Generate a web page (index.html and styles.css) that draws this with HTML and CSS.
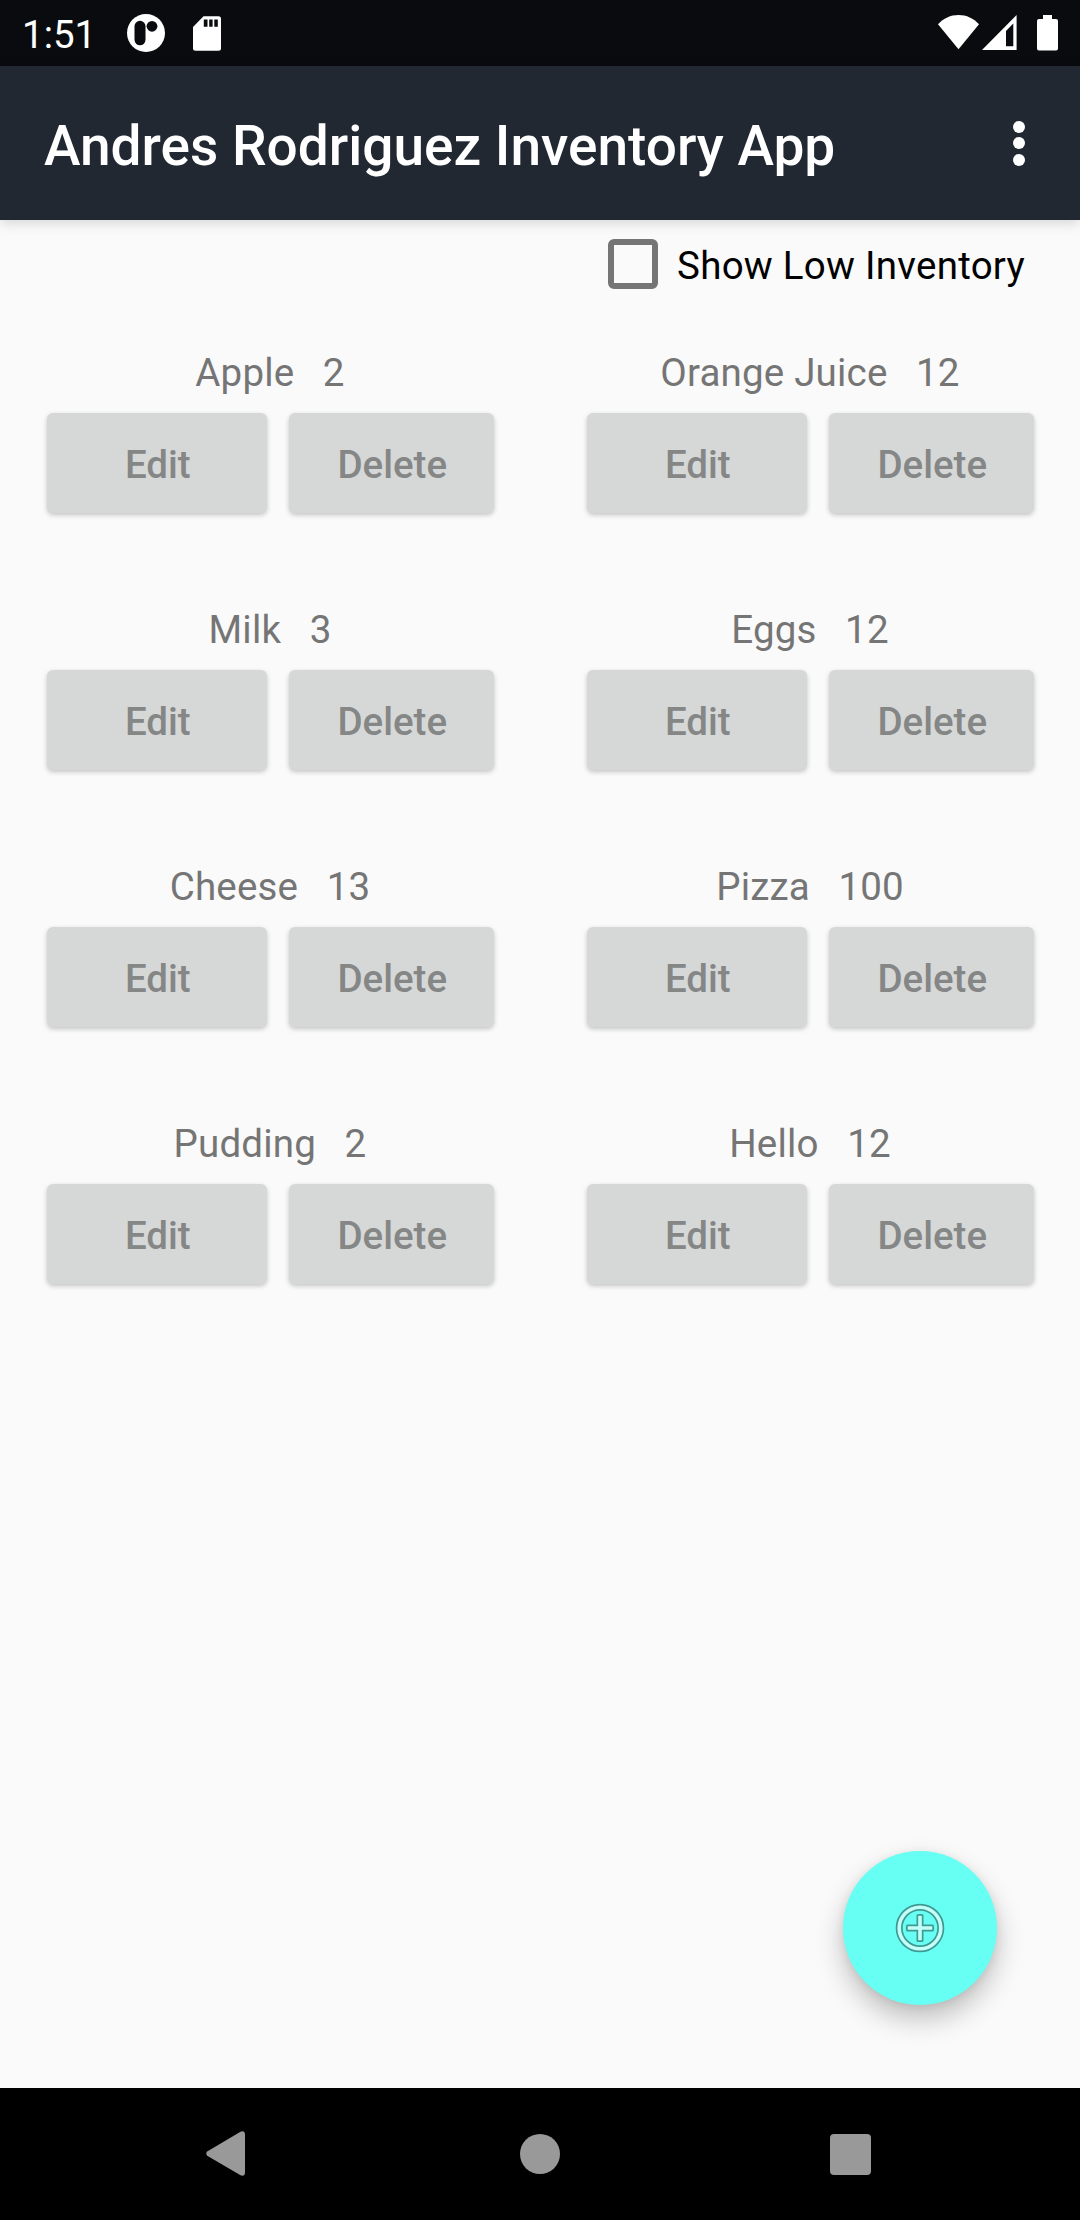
FILE: index.html
```html
<!DOCTYPE html>
<html lang="en">
<head>
<meta charset="utf-8">
<title>Andres Rodriguez Inventory App</title>
<link rel="stylesheet" href="styles.css">
</head>
<body>
<div class="status-bar">
  <span class="clock">1:51</span>
  <svg class="notif" width="38" height="38" viewBox="0 0 38 38"><circle cx="19" cy="19" r="19" fill="#fff"/><rect x="7.5" y="6.8" width="11" height="24.5" rx="5.5" fill="#0a0b0f"/><circle cx="25" cy="12.3" r="5.4" fill="#0a0b0f"/></svg>
  <svg class="sd" width="28" height="35" viewBox="0 0 28 35"><path d="M10.500.3H25.500A2.500 2.500 0 0 1 28 2.800V32.200A2.500 2.500 0 0 1 25.500 34.700H2.500A2.500 2.500 0 0 1 0 32.200V11Z" fill="#fff"/><path d="M10.800 3.500h3.700v7.300h-3.700zM16.200 3.500h3.400v7.300h-3.400zM21.300 3.500h3.500v7.300h-3.500z" fill="#0a0b0f"/></svg>
  <span class="spacer"></span>
  <svg class="wifi" width="41" height="35" viewBox="0 0 41 35"><path d="M0 9.300C5.500 3.300 12.500 0 20.500 0S35.500 3.300 41 9.300L20.500 34.300Z" fill="#fff"/></svg>
  <svg class="signal" width="35" height="35" viewBox="0 0 35 35"><path fill-rule="evenodd" d="M34.600 0V35H0ZM31.300 8.500L24 16V31.300H31.300Z" fill="#fff"/></svg>
  <svg class="battery" width="21" height="36" viewBox="0 0 21 36"><path d="M6 0H15V4H19Q21 4 21 6V33.500Q21 35.500 19 35.500H2Q0 35.500 0 33.500V6Q0 4 2 4H6Z" fill="#fff"/></svg>
</div>
<header class="app-bar">
  <h1 class="title">Andres Rodriguez Inventory App</h1>
  <div class="overflow"><i class="dot"></i><i class="dot"></i><i class="dot"></i></div>
</header>
<main class="content">
  <label class="filter"><span class="box"></span><span class="filter-label">Show Low Inventory</span></label>
  <section class="grid">
    <article class="item"><p class="line"><span>Apple</span><span>2</span></p><div class="actions"><button class="btn">Edit</button><button class="btn">Delete</button></div></article>
    <article class="item"><p class="line"><span>Orange Juice</span><span>12</span></p><div class="actions"><button class="btn">Edit</button><button class="btn">Delete</button></div></article>
    <article class="item"><p class="line"><span>Milk</span><span>3</span></p><div class="actions"><button class="btn">Edit</button><button class="btn">Delete</button></div></article>
    <article class="item"><p class="line"><span>Eggs</span><span>12</span></p><div class="actions"><button class="btn">Edit</button><button class="btn">Delete</button></div></article>
    <article class="item"><p class="line"><span>Cheese</span><span>13</span></p><div class="actions"><button class="btn">Edit</button><button class="btn">Delete</button></div></article>
    <article class="item"><p class="line"><span>Pizza</span><span>100</span></p><div class="actions"><button class="btn">Edit</button><button class="btn">Delete</button></div></article>
    <article class="item"><p class="line"><span>Pudding</span><span>2</span></p><div class="actions"><button class="btn">Edit</button><button class="btn">Delete</button></div></article>
    <article class="item"><p class="line"><span>Hello</span><span>12</span></p><div class="actions"><button class="btn">Edit</button><button class="btn">Delete</button></div></article>
  </section>
  <button class="fab" aria-label="Add item">
    <svg width="50" height="50" viewBox="0 0 50 50" fill="none">
      <circle cx="25" cy="25" r="20.800" stroke="#3f9a93" stroke-width="7"/>
      <circle cx="25" cy="25" r="20.800" stroke="#c2fff9" stroke-width="3.600"/>
      <path d="M21.500 12.500a1.500 1.500 0 0 1 1.500-1.500h4a1.500 1.500 0 0 1 1.500 1.500v9h9a1.500 1.500 0 0 1 1.500 1.500v4a1.500 1.500 0 0 1-1.500 1.500h-9v9a1.500 1.500 0 0 1-1.500 1.500h-4a1.500 1.500 0 0 1-1.500-1.500v-9h-9a1.500 1.500 0 0 1-1.500-1.500v-4a1.500 1.500 0 0 1 1.500-1.500h9z" fill="#3f9a93"/>
      <path d="M25 12.700V37.300M12.700 25H37.300" stroke="#c2fff9" stroke-width="3.600"/>
    </svg>
  </button>
</main>
<nav class="nav-bar">
  <svg width="40" height="46" viewBox="0 0 40 46"><path d="M1.200 20.500L34.500.800Q38.700-.900 39 3.500V41.500Q38.700 45.900 34.500 44.200L1.200 24.800Q-.700 22.600 1.200 20.500Z" fill="#999"/></svg>
  <svg class="home" width="40" height="40" viewBox="0 0 40 40"><circle cx="20" cy="20" r="20" fill="#999"/></svg>
  <svg width="41" height="41" viewBox="0 0 41 41"><rect width="41" height="41" rx="4" fill="#999"/></svg>
</nav>
</body>
</html>
```
FILE: styles.css
```css
* { box-sizing: border-box; }
body {
  margin: 0;
  width: 1080px;
  height: 2220px;
  display: flex;
  flex-direction: column;
  background: #fafafa;
  font-family: Roboto, "Liberation Sans", sans-serif;
  font-size: 38.5px;
  overflow: hidden;
}
svg { display: block; flex: none; }

.status-bar {
  height: 66px;
  flex: none;
  display: flex;
  align-items: flex-start;
  padding: 0 22px;
  background: #0a0b0f;
  color: #fff;
}
.clock { width: 105px; line-height: 45px; padding-top: 12px; }
.notif { margin-top: 14px; }
.sd { margin: 16px 0 0 28px; }
.spacer { flex: 1; }
.wifi { margin-top: 15px; }
.signal { margin: 15px 20px 0 3px; }
.battery { margin-top: 15px; }

.app-bar {
  height: 154px;
  flex: none;
  display: flex;
  align-items: center;
  justify-content: space-between;
  padding: 0 55px 0 44px;
  background: #212832;
  box-shadow: 0 3px 12px rgba(0, 0, 0, .15);
  color: #fff;
  z-index: 1;
}
.title { margin: 6px 0 0; font-size: 55px; font-weight: 500; line-height: 64px; }
.overflow { display: flex; flex-direction: column; gap: 4.5px; }
.dot { width: 12px; height: 12px; border-radius: 50%; background: #fff; }

.content { flex: 1; position: relative; }
.filter {
  display: flex;
  justify-content: flex-end;
  align-items: center;
  height: 88px;
  padding-right: 55px;
  color: #000;
}
.box { width: 50px; height: 50px; border: 6px solid #757575; border-radius: 6px; margin-right: 19px; }
.filter-label { line-height: 45px; padding-top: 2px; letter-spacing: .26px; }

.grid { display: grid; grid-template-columns: 540px 540px; grid-auto-rows: 257px; padding-top: 42px; }
.item { padding-left: 46.5px; }
.line {
  display: flex;
  justify-content: center;
  gap: 28.5px;
  width: 447px;
  margin: 0 0 18px;
  line-height: 45px;
  letter-spacing: .18px;
  color: #757575;
}
.actions { display: grid; grid-template-columns: 220.5px 204.5px; gap: 22px; }
.btn {
  height: 100px;
  padding: 2px 0 0 2px;
  border: 0;
  border-radius: 6px;
  background: #d6d8d7;
  color: #858686;
  font: 500 38.5px/45px Roboto, "Liberation Sans", sans-serif;
  box-shadow: 0 2px 5px rgba(0, 0, 0, .22);
}

/* The add button floats over the list. */
.fab {
  position: absolute;
  right: 83px;
  bottom: 83px;
  width: 154px;
  height: 154px;
  padding: 0;
  border: 0;
  border-radius: 50%;
  display: grid;
  place-items: center;
  background: #67fff3;
  box-shadow: 0 14px 28px rgba(0, 0, 0, .24), 0 2px 10px rgba(0, 0, 0, .08);
}

.nav-bar {
  height: 132px;
  flex: none;
  display: flex;
  align-items: center;
  padding-left: 206px;
  background: #000;
}
.home { margin: 0 270px 0 274px; }
```
